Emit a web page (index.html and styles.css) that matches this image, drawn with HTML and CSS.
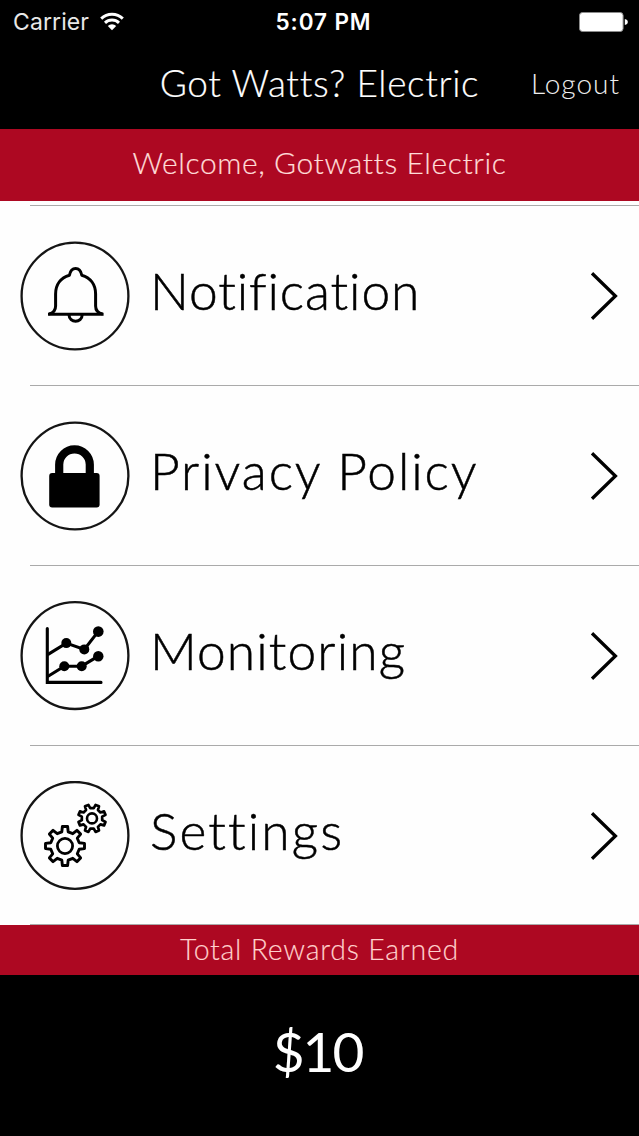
FILE: index.html
```html
<!DOCTYPE html>
<html lang="en">
<head>
<meta charset="utf-8">
<title>Got Watts? Electric</title>
<link rel="stylesheet" href="styles.css">
</head>
<body>
<div class="app">
  <div class="status">
    <div class="status-left">
      <span class="carrier">Carrier</span>
      <svg class="wifi" viewBox="0 0 24 19" width="24" height="19">
        <g fill="none" stroke="#fff" stroke-width="2.9">
          <path d="M1.2 6.6A15.4 15.4 0 0 1 22.8 6.6"/>
          <path d="M5 10.9A10 10 0 0 1 19 10.9"/>
        </g>
        <path d="M12 18.2L7.8 14A6 6 0 0 1 16.2 14Z" fill="#fff"/>
      </svg>
    </div>
    <span class="clock">5:07 PM</span>
    <div class="status-right">
      <svg width="50" height="20" viewBox="0 0 50 20">
        <rect x="0.5" y="0.5" width="43.6" height="19" rx="3" fill="#fff" stroke="#8b8b8b"/>
        <path d="M45.8 7Q48.8 7.6 48.8 10T45.8 13Z" fill="#fff"/>
      </svg>
    </div>
  </div>
  <header class="nav">
    <span class="nav-side"></span>
    <h1 class="nav-title">Got Watts? Electric</h1>
    <a class="nav-side logout">Logout</a>
  </header>
  <div class="welcome"><span>Welcome, Gotwatts Electric</span></div>
  <ul class="menu">
    <li class="item">
      <svg class="icon" viewBox="0 0 110 110">
        <circle class="ring" cx="55" cy="55" r="53.4"/>
        <g fill="none" stroke="#000" stroke-width="3">
          <path d="M29 73C33.5 72 35.6 69 35.6 65V53C35.6 43.5 41 36.6 49.4 34.2C50.4 29.6 52.6 27.6 55.6 27.6S60.8 29.6 61.8 34.2C70.2 36.6 75.6 43.5 75.6 53V65C75.6 69 77.7 72 82.6 73" stroke-linejoin="round"/>
          <path d="M28 73.2H83.6"/>
          <path d="M49 73.6C49.2 82.4 62 82.4 62.2 73.6"/>
        </g>
      </svg>
      <span class="label notification">Notification</span>
      <svg class="chevron" viewBox="0 0 30 52"><path d="M4 3.2L27.4 26L4 48.8"/></svg>
    </li>
    <li class="item">
      <svg class="icon" viewBox="0 0 110 110">
        <circle class="ring" cx="55" cy="55" r="53.4"/>
        <path d="M39.2 55V43.6A15.3 15.3 0 0 1 69.8 43.6V55" fill="none" stroke="#000" stroke-width="8.2"/>
        <rect x="29.2" y="52" width="50.4" height="34.4" rx="3" fill="#000"/>
      </svg>
      <span class="label privacy">Privacy Policy</span>
      <svg class="chevron" viewBox="0 0 30 52"><path d="M4 3.2L27.4 26L4 48.8"/></svg>
    </li>
    <li class="item">
      <svg class="icon" viewBox="0 0 110 110">
        <circle class="ring" cx="55" cy="54.6" r="53.4"/>
        <g fill="none" stroke="#000" stroke-width="3.1" stroke-linecap="round">
          <path d="M27.3 27.6V81.4H81"/>
          <path d="M28.5 53.1L46.3 42.1L64.3 48.4L78.3 30.4"/>
          <path d="M28.5 75L44.3 65.2H61.7L78.3 55.2"/>
        </g>
        <circle cx="46.3" cy="42.1" r="5"/><circle cx="64.3" cy="48.4" r="5"/><circle cx="78.3" cy="30.6" r="5.3"/>
        <circle cx="44.3" cy="65.2" r="5"/><circle cx="61.7" cy="65.2" r="5"/><circle cx="78.3" cy="55.2" r="5.2"/>
      </svg>
      <span class="label monitoring">Monitoring</span>
      <svg class="chevron" viewBox="0 0 30 52"><path d="M4 3.2L27.4 26L4 48.8"/></svg>
    </li>
    <li class="item">
      <svg class="icon" viewBox="0 0 110 110">
        <defs>
          <path id="gear" d="M-3.2 -14.2L-2.6 -19.5H2.6L3.2 -14.2L7.78 -12.3L11.95 -15.63L15.63 -11.95L12.3 -7.78L14.2 -3.2L19.5 -2.6V2.6L14.2 3.2L12.3 7.78L15.63 11.95L11.95 15.63L7.78 12.3L3.2 14.2L2.6 19.5H-2.6L-3.2 14.2L-7.78 12.3L-11.95 15.63L-15.63 11.95L-12.3 7.78L-14.2 3.2L-19.5 2.6V-2.6L-14.2 -3.2L-12.3 -7.78L-15.63 -11.95L-11.95 -15.63L-7.78 -12.3Z"/>
        </defs>
        <circle class="ring" cx="55" cy="54.4" r="53.4"/>
        <g fill="none" stroke="#000" stroke-linejoin="round">
          <use href="#gear" transform="translate(45 65)" stroke-width="2.9"/>
          <circle cx="45" cy="65" r="7.6" stroke-width="2.8"/>
          <use href="#gear" transform="translate(72 37.4) rotate(22.5) scale(.71)" stroke-width="3.8"/>
          <circle cx="72" cy="37.4" r="5" stroke-width="2.6"/>
        </g>
      </svg>
      <span class="label settings">Settings</span>
      <svg class="chevron" viewBox="0 0 30 52"><path d="M4 3.2L27.4 26L4 48.8"/></svg>
    </li>
  </ul>
  <div class="rewards"><span>Total Rewards Earned</span></div>
  <footer class="amount"><span>$10</span></footer>
</div>
</body>
</html>
```
FILE: styles.css
```css
* { box-sizing: border-box; }
body { margin: 0; background: #fefefe; font-family: Lato, "Open Sans", sans-serif; font-weight: 300; font-variant-ligatures: none; }
.app { width: 639px; height: 1136px; display: flex; flex-direction: column; background: #fefefe; overflow: hidden; }

.status { height: 42px; background: #000; color: #fff; display: grid; grid-template-columns: 1fr auto 1fr; align-items: center; padding: 1px 10px 0 13px; font-family: Inter, sans-serif; }
.status-left { display: flex; align-items: center; gap: 11px; }
.carrier { font-size: 23px; font-weight: 400; color: #e8e8e8; letter-spacing: 0.1px; }
.clock { font-size: 22.5px; font-weight: 600; letter-spacing: 0.9px; padding-left: 5px; }
.status-right { display: flex; justify-content: flex-end; }

.nav { height: 87px; background: #000; color: #fff; display: grid; grid-template-columns: 1fr auto 1fr; align-items: center; padding: 0 20px 6px; }
.nav-title { margin: 0; font-size: 37px; font-weight: 300; white-space: nowrap; letter-spacing: 0.65px; -webkit-text-stroke: 0.2px; }
.logout { text-align: right; font-size: 28px; color: #eee; letter-spacing: 1px; margin-right: -1px; padding-top: 1px; }

.welcome { height: 72px; background: #ad0822; color: #ffdcd8; display: flex; align-items: center; justify-content: center; padding-bottom: 6px; font-size: 30px; letter-spacing: 0.58px; white-space: nowrap; -webkit-text-stroke: 0.2px; }

.menu { list-style: none; margin: 0; padding: 4px 0 0; }
.menu::before { content: ""; display: block; height: 1px; margin-left: 30px; background: #aaa; }
.item { height: 180px; display: flex; align-items: center; padding: 0 20px; background: linear-gradient(#aaa, #aaa) right bottom / 609px 1px no-repeat; }
.item:last-child { height: 179px; }
.icon { width: 110px; height: 110px; flex: none; }
.ring { fill: none; stroke: #151515; stroke-width: 2.3; }
.label { flex: 1; margin-left: 20px; padding-bottom: 12px; font-size: 51.5px; line-height: 60px; color: #000; white-space: nowrap; -webkit-text-stroke: 0.5px #000; }
.notification { letter-spacing: 0.9px; }
.privacy { letter-spacing: 1.9px; }
.monitoring { letter-spacing: 1.1px; }
.settings { letter-spacing: 2.1px; }
.chevron { width: 30px; height: 52px; flex: none; margin-right: 1px; }
.chevron path { fill: none; stroke: #000; stroke-width: 3.3; }

.rewards { height: 50px; background: #ad0822; color: #ffd0cc; display: flex; align-items: center; justify-content: center; padding-bottom: 3px; font-size: 28.5px; letter-spacing: 0.75px; white-space: nowrap; -webkit-text-stroke: 0.15px; }
.amount { flex: 1; background: #000; color: #fff; display: flex; align-items: center; justify-content: center; padding: 0 4px 9px 0; font-size: 55px; font-weight: 400; letter-spacing: -2px; }
```
